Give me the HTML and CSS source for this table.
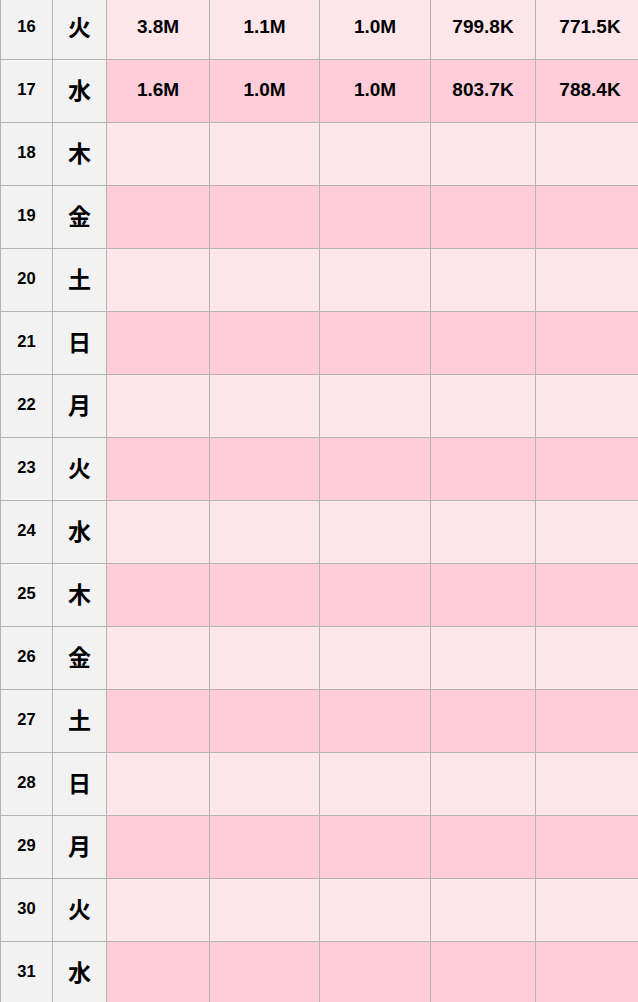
FILE: index.html
```html
<!DOCTYPE html>
<html lang="ja">
<head>
<meta charset="utf-8">
<link rel="stylesheet" href="styles.css">
</head>
<body>
<div class="viewport">
<table class="grid">
<colgroup>
<col class="c-day"><col class="c-wd"><col class="c-a"><col class="c-b"><col class="c-c"><col class="c-d"><col class="c-e">
</colgroup>
<tbody>
<tr class="light"><td class="day">16</td><td class="wd">火</td><td>3.8M</td><td>1.1M</td><td>1.0M</td><td>799.8K</td><td>771.5K</td></tr>
<tr class="dark"><td class="day">17</td><td class="wd">水</td><td>1.6M</td><td>1.0M</td><td>1.0M</td><td>803.7K</td><td>788.4K</td></tr>
<tr class="light"><td class="day">18</td><td class="wd">木</td><td></td><td></td><td></td><td></td><td></td></tr>
<tr class="dark"><td class="day">19</td><td class="wd">金</td><td></td><td></td><td></td><td></td><td></td></tr>
<tr class="light"><td class="day">20</td><td class="wd">土</td><td></td><td></td><td></td><td></td><td></td></tr>
<tr class="dark"><td class="day">21</td><td class="wd">日</td><td></td><td></td><td></td><td></td><td></td></tr>
<tr class="light"><td class="day">22</td><td class="wd">月</td><td></td><td></td><td></td><td></td><td></td></tr>
<tr class="dark"><td class="day">23</td><td class="wd">火</td><td></td><td></td><td></td><td></td><td></td></tr>
<tr class="light"><td class="day">24</td><td class="wd">水</td><td></td><td></td><td></td><td></td><td></td></tr>
<tr class="dark"><td class="day">25</td><td class="wd">木</td><td></td><td></td><td></td><td></td><td></td></tr>
<tr class="light"><td class="day">26</td><td class="wd">金</td><td></td><td></td><td></td><td></td><td></td></tr>
<tr class="dark"><td class="day">27</td><td class="wd">土</td><td></td><td></td><td></td><td></td><td></td></tr>
<tr class="light"><td class="day">28</td><td class="wd">日</td><td></td><td></td><td></td><td></td><td></td></tr>
<tr class="dark"><td class="day">29</td><td class="wd">月</td><td></td><td></td><td></td><td></td><td></td></tr>
<tr class="light"><td class="day">30</td><td class="wd">火</td><td></td><td></td><td></td><td></td><td></td></tr>
<tr class="dark"><td class="day">31</td><td class="wd">水</td><td></td><td></td><td></td><td></td><td></td></tr>
</tbody>
</table>
</div>
</body>
</html>
```
FILE: styles.css
```css
html, body {
  margin: 0;
  padding: 0;
  background: #ffffff;
  overflow: hidden;
}
.viewport {
  width: 638px;
  height: 1002px;
  overflow: hidden;
}
.grid {
  margin-top: -4px;
  border-collapse: collapse;
  table-layout: fixed;
  width: 644px;
  font-family: "Liberation Sans", Arial, sans-serif;
  font-weight: bold;
  color: #000000;
}
.c-day { width: 52px; }
.c-wd { width: 54px; }
.c-a { width: 103px; }
.c-b { width: 110px; }
.c-c { width: 111px; }
.c-d { width: 105px; }
.c-e { width: 109px; }
.grid td {
  height: 59px;
  padding: 0 0 3px 0;
  border: 1px solid #b3b3b3;
  text-align: center;
  vertical-align: middle;
  font-size: 19px;
}
.light td { background: #ffe6eb; }
.dark td { background: #ffcdd9; }
.grid td.day,
.grid td.wd {
  background: #f2f2f2;
}
.grid td.day {
  font-size: 16.5px;
}
.grid td.wd {
  font-family: "Noto Sans CJK JP", "Noto Sans CJK SC", sans-serif;
  font-size: 23px;
  height: 57px;
  padding-bottom: 5px;
}
```
